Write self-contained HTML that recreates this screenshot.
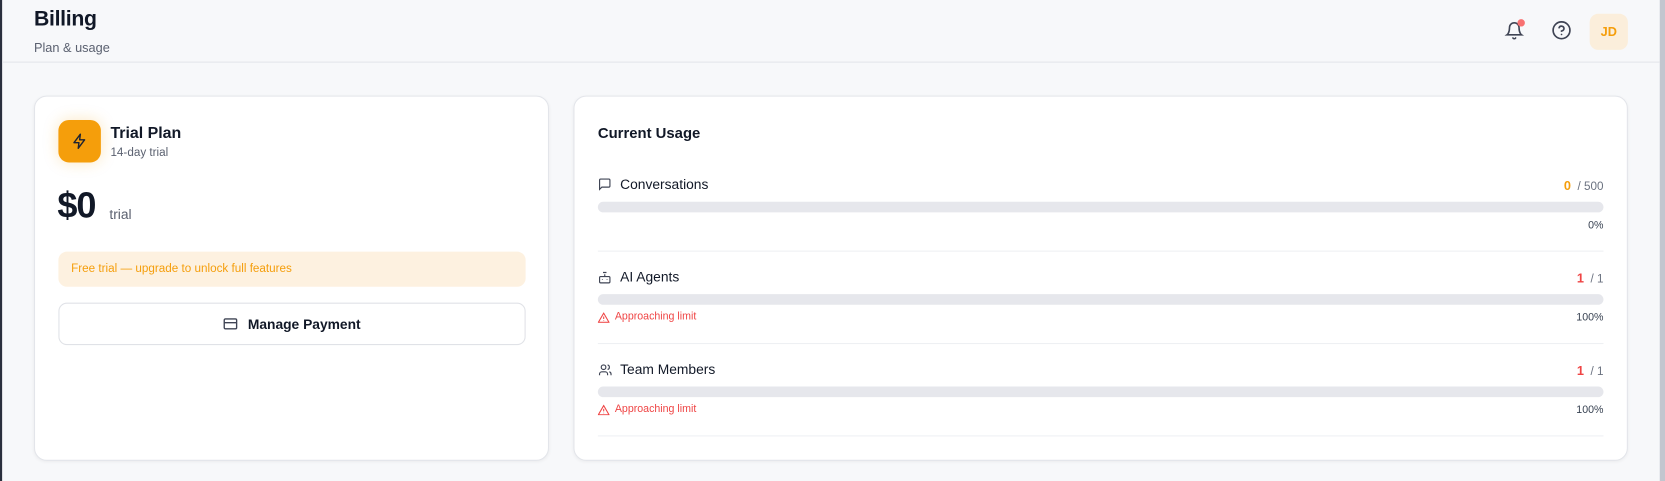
<!DOCTYPE html>
<html><head><meta charset="utf-8"><style>
*{box-sizing:border-box;margin:0;padding:0}
html,body{width:1665px;height:481px;overflow:hidden;background:#f7f8fa}
#w{position:absolute;left:0;top:0;width:1568px;height:453px;transform:scale(1.0619);transform-origin:0 0;font-family:"Liberation Sans",sans-serif;color:#111827}
.lb{position:absolute;left:0;top:0;width:2px;height:453px;background:#2a2f3d}
.sb{position:absolute;left:1563px;top:0;width:5px;height:453px;background:#c3c6cf}
.hdr{position:absolute;left:2px;top:0;width:1561px;height:59px;border-bottom:1px solid #e3e5ea}
h1{position:absolute;left:30px;top:7px;font-size:20px;font-weight:bold;letter-spacing:-0.3px}
.sub{position:absolute;left:30px;top:38px;font-size:12px;color:#5b6170}
.card{position:absolute;background:#fff;border:1px solid #e3e5ea;border-radius:12px;box-shadow:0 1px 3px rgba(0,0,0,.05)}
.ico{position:absolute;left:22px;top:22px;width:40px;height:40px;border-radius:10px;background:#f59e0b;box-shadow:0 0 14px rgba(245,158,11,.25);display:flex;align-items:center;justify-content:center}
.bar{position:absolute;left:22px;right:22px;height:10px;border-radius:5px;background:#e6e7ec}
.row{position:absolute;left:22px;right:22px;font-size:13px}
.sep{position:absolute;left:22px;right:22px;height:1px;background:#eef0f3}
.warn{position:absolute;left:22px;font-size:10px;color:#ef4444;display:flex;align-items:center;gap:5px}
.pct{position:absolute;right:22px;font-size:10px;color:#374151}
.cnt{position:absolute;right:22px;font-size:11px;color:#6b7280}
</style></head><body><div id="w">
<div class="lb"></div><div class="sb"></div>
<div class="hdr">
<h1>Billing</h1><div class="sub">Plan &amp; usage</div>
<svg style="position:absolute;left:1415px;top:19px" width="18" height="20" viewBox="0 0 24 24" fill="none" stroke="#3f4454" stroke-width="2" stroke-linecap="round"><path d="M6 8a6 6 0 0 1 12 0c0 7 3 9 3 9H3s3-2 3-9"/><path d="M10.3 21a1.94 1.94 0 0 0 3.4 0"/></svg>
<div style="position:absolute;left:1427px;top:18px;width:7px;height:7px;border-radius:50%;background:#f87171"></div>
<svg style="position:absolute;left:1459px;top:19px" width="19" height="19" viewBox="0 0 24 24" fill="none" stroke="#3f4454" stroke-width="2" stroke-linecap="round"><circle cx="12" cy="12" r="10"/><path d="M9.1 9a3 3 0 0 1 5.8 1c0 2-3 3-3 3"/><path d="M12 17h.01"/></svg>
<div style="position:absolute;left:1495px;top:13px;width:36px;height:34px;border-radius:8px;background:#fbeedb;color:#f59e0b;font-weight:bold;font-size:12px;display:flex;align-items:center;justify-content:center">JD</div>
</div>

<div class="card" style="left:32px;top:90px;width:485px;height:344px">
<div class="ico"><svg width="16" height="16" viewBox="0 0 24 24" fill="none" stroke="#1f2330" stroke-width="2" stroke-linejoin="round" stroke-linecap="round"><path d="M13 2 4 14h7l-1 8 9-12h-7z"/></svg></div>
<div style="position:absolute;left:71px;top:26px;font-size:15px;font-weight:bold">Trial Plan</div>
<div style="position:absolute;left:71px;top:47px;font-size:11px;color:#5b6170">14-day trial</div>
<div style="position:absolute;left:21px;top:84px;font-size:34px;font-weight:bold;letter-spacing:-1px">$0</div>
<div style="position:absolute;left:70px;top:103px;font-size:13px;color:#5b6170">trial</div>
<div style="position:absolute;left:22px;top:146px;width:440px;height:33px;border-radius:8px;background:#fdf1e0;color:#f59e0b;font-size:11px;padding:10px 12px">Free trial — upgrade to unlock full features</div>
<div style="position:absolute;left:22px;top:194px;width:440px;height:40px;border:1px solid #e0e2e7;border-radius:8px;display:flex;align-items:center;justify-content:center;gap:9px;font-size:13px;font-weight:bold">
<svg width="14" height="12" viewBox="0 0 24 20" fill="none" stroke="#3f4454" stroke-width="2.2"><rect x="2" y="2" width="20" height="16" rx="2"/><path d="M2 8h20"/></svg>Manage Payment</div>
</div>

<div class="card" style="left:540px;top:90px;width:993px;height:344px">
<div style="position:absolute;left:22px;top:26px;font-size:14px;font-weight:bold">Current Usage</div>

<div class="row" style="top:75px"><svg style="position:absolute;left:0;top:1px" width="13" height="13" viewBox="0 0 24 24" fill="none" stroke="#3f4454" stroke-width="2"><path d="M21 15a2 2 0 0 1-2 2H7l-4 4V5a2 2 0 0 1 2-2h14a2 2 0 0 1 2 2z"/></svg><span style="position:absolute;left:21px">Conversations</span></div>
<div class="cnt" style="top:77px"><b style="color:#f59e0b;font-size:12px">0</b>&nbsp; / 500</div>
<div class="bar" style="top:99px"></div>
<div class="pct" style="top:116px">0%</div>
<div class="sep" style="top:145px"></div>

<div class="row" style="top:162px"><svg style="position:absolute;left:0;top:2px" width="13" height="13" viewBox="0 0 24 24" fill="none" stroke="#3f4454" stroke-width="2"><rect x="3" y="10" width="18" height="11" rx="2"/><path d="M12 10V6M9 3h6M8 15v1M16 15v1"/></svg><span style="position:absolute;left:21px">AI Agents</span></div>
<div class="cnt" style="top:164px"><b style="color:#ef4444;font-size:12px">1</b>&nbsp; / 1</div>
<div class="bar" style="top:186px"></div>
<div class="warn" style="top:202px"><svg width="11" height="10" viewBox="0 0 24 22" fill="none" stroke="#ef4444" stroke-width="2.2"><path d="M12 2 1 21h22z"/><path d="M12 9v5M12 17v1"/></svg>Approaching limit</div>
<div class="pct" style="top:203px">100%</div>
<div class="sep" style="top:232px"></div>

<div class="row" style="top:249px"><svg style="position:absolute;left:0;top:2px" width="14" height="13" viewBox="0 0 24 24" fill="none" stroke="#3f4454" stroke-width="2"><circle cx="9" cy="7" r="4"/><path d="M2 21v-2a4 4 0 0 1 4-4h6a4 4 0 0 1 4 4v2M16 3.1a4 4 0 0 1 0 7.8M22 21v-2a4 4 0 0 0-3-3.9"/></svg><span style="position:absolute;left:21px">Team Members</span></div>
<div class="cnt" style="top:251px"><b style="color:#ef4444;font-size:12px">1</b>&nbsp; / 1</div>
<div class="bar" style="top:273px"></div>
<div class="warn" style="top:289px"><svg width="11" height="10" viewBox="0 0 24 22" fill="none" stroke="#ef4444" stroke-width="2.2"><path d="M12 2 1 21h22z"/><path d="M12 9v5M12 17v1"/></svg>Approaching limit</div>
<div class="pct" style="top:290px">100%</div>
<div class="sep" style="top:319px"></div>
</div>
</div></body></html>
